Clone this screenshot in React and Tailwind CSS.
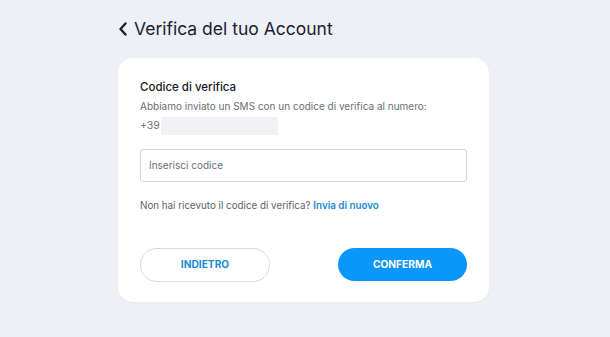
import React from "react";

export default function App() {
  return (
    <div className="min-h-[337px] w-full bg-[#eef0f5] font-['Inter',sans-serif]">
      <div className="w-[371px] pt-[17px] ml-[118px]">
        <div className="flex items-center gap-[6px] h-[24px]">
          <svg width="10" height="14" viewBox="0 0 10 14" className="shrink-0">
            <path d="M7.5 1.5 L2.5 7 L7.5 12.5" fill="none" stroke="#1b2035" strokeWidth="2.4" strokeLinecap="round" strokeLinejoin="round" />
          </svg>
          <h1 className="text-[17.5px] leading-[24px] text-[#1b2035]">Verifica del tuo Account</h1>
        </div>

        <div className="mt-[17px] rounded-[15px] bg-white px-[22px] pt-[21px] pb-[20px] shadow-[0_1px_3px_rgba(0,0,0,0.04)]">
          <div className="text-[11.5px] font-medium leading-[16px] text-[#16181d]">Codice di verifica</div>
          <div className="mt-[3px] text-[10px] leading-[16px] text-[#6b6e76]">
            Abbiamo inviato un SMS con un codice di verifica al numero:
          </div>
          <div className="mt-[2px] flex items-center h-[20px]">
            <span className="text-[10.5px] text-[#6b6e76]">+39</span>
            <span className="ml-[1px] h-[18px] w-[117px] bg-[#f0f0f5]" />
          </div>
          <div className="mt-[13px] flex h-[33px] items-center rounded-[3px] border border-[#d3d5da] px-[8px] text-[10px] text-[#6b6e76]">
            Inserisci codice
          </div>
          <div className="mt-[16px] text-[9.8px] leading-[16px] text-[#5c5f66]">
            Non hai ricevuto il codice di verifica?{" "}
            <span className="font-semibold text-[#1a8ad6]">Invia di nuovo</span>
          </div>
          <div className="mt-[34px] flex justify-between">
            <button className="h-[34px] w-[130px] rounded-full border border-[#d8dadf] bg-white text-[10.2px] font-bold text-[#1a8ad6]">
              INDIETRO
            </button>
            <button className="h-[33px] w-[129px] rounded-full bg-[#0b96fb] text-[10.2px] font-bold text-white">
              CONFERMA
            </button>
          </div>
        </div>
      </div>
    </div>
  );
}
